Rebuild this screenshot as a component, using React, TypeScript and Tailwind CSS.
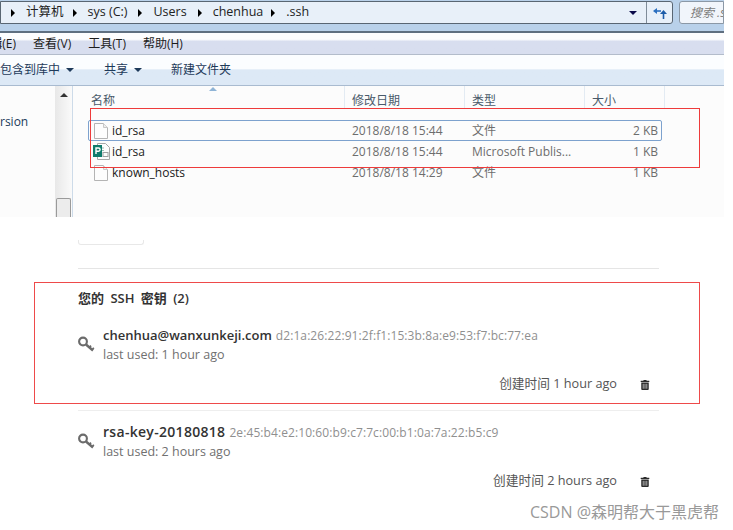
import { FaTrashAlt } from "react-icons/fa";
import type { ReactNode } from "react";

const cjk = "font-['Open_Sans','Noto_Sans_CJK_SC',sans-serif]";

function Tri({ className = "" }: { className?: string }) {
  return <span className={`inline-block w-0 h-0 border-l-[4px] border-r-[4px] border-t-[4px] border-l-transparent border-r-transparent ${className}`} />;
}

function Crumb({ label, className = "" }: { label: string; className?: string }) {
  return (
    <>
      <span className="w-0 h-0 border-y-[4px] border-l-[4px] border-y-transparent border-l-black" />
      <span className={className}>{label}</span>
    </>
  );
}

function FileIcon() {
  return (
    <svg width="14" height="16" viewBox="0 0 14 16" className="shrink-0">
      <path d="M.5.5H9.5L13.5 4.5V15.5H.5Z" fill="#fdfdfd" stroke="#b4b4b4" />
      <path d="M9.5.5V4.5H13.5" fill="#eee" stroke="#c8c8c8" />
    </svg>
  );
}

function PubIcon() {
  return (
    <svg width="17" height="17" viewBox="0 0 17 17" className="shrink-0">
      <path d="M4.5.5H12.5L16.5 4.5V16.5H4.5Z" fill="#fdfdfd" stroke="#a8a8a8" />
      <path d="M8 5H11M8 7.5H11" stroke="#9dbdb4" />
      <rect x="10" y="9.5" width="5" height="4" fill="none" stroke="#a0a0a0" />
      <rect x="0" y="2" width="9" height="12" fill="#0f7b6c" />
      <path d="M3 11V5H5.5A1.5 1.5 0 0 1 5.5 8.2H3" fill="none" stroke="#fff" strokeWidth="1.4" />
    </svg>
  );
}

function FileRow({ icon, name, date, type, size, selected }: { icon: ReactNode; name: string; date: string; type: string; size: string; selected?: boolean }) {
  return (
    <div className={`flex items-center h-[21px] w-[574px] rounded-[2px] border ${selected ? "border-[#7da2ce]" : "border-transparent"}`}>
      <div className="w-[3px]" />
      <div className="w-[18px] flex justify-center">{icon}</div>
      <div className="w-[242px] pl-[2px] text-[#1a1a1a]">{name}</div>
      <div className="w-[120px] text-[#6d6d6d]">{date}</div>
      <div className="w-[123px] text-[#6d6d6d]">{type}</div>
      <div className="w-[63px] text-right text-[#6d6d6d]">{size}</div>
    </div>
  );
}

function KeyIcon() {
  return (
    <svg width="17" height="17" viewBox="0 0 17 17" fill="none" stroke="#6b6b6b" className="shrink-0">
      <circle cx="5" cy="5.5" r="3.9" strokeWidth="2.1" />
      <path d="M8 8.5 15 14.5" strokeWidth="2.4" />
      <path d="M11.5 11.5 13 9.6M14.2 13.8 15.8 11.8" strokeWidth="1.7" />
    </svg>
  );
}

function SshKey({ name, nameClass, finger, used, created }: { name: string; nameClass: string; finger: string; used: string; created: string }) {
  return (
    <div className="w-[581px]">
      <div className="flex">
        <div className="w-[25px] pt-[12px]"><KeyIcon /></div>
        <div>
          <div className="h-[20px] leading-[20px] whitespace-nowrap">
            <span className={`font-semibold text-[#333] ${nameClass}`}>{name}</span>
            <span className="text-[12px] tracking-[0.09px] text-[#8f8f8f] ml-[4px]">{finger}</span>
          </div>
          <div className="h-[20px] leading-[21px] text-[12.5px] text-[#707070]">last used: {used}</div>
        </div>
      </div>
      <div className="flex justify-end items-center h-[18px] mt-[11px] pr-[9px] text-[12.7px] text-[#555]">
        <span>创建时间 {created}</span>
        <FaTrashAlt className="ml-[23px] mt-[1px] text-[#2b2b2b]" size={10} />
      </div>
    </div>
  );
}

export default function App() {
  return (
    <div className={`relative w-[733px] h-[530px] bg-white overflow-hidden ${cjk}`}>
      {/* Explorer window */}
      <div className="w-[724px] h-[217px] flex flex-col text-[12px] bg-[#fcfcfc]">
        <div className="h-[31px] bg-[#b9d1ea] flex items-start pt-[1px] gap-[6px] shrink-0">
          <div className="w-[673px] h-[23px] bg-[#e8f0f9] border border-[#596673] rounded-r-[3px] flex items-center relative">
            <div className="flex-1 flex items-center gap-[11px] pl-[10px] text-[12.5px] text-[#222] leading-none">
              <Crumb label="计算机" className="-mr-[2px]" />
              <Crumb label="sys (C:)" />
              <Crumb label="Users" />
              <Crumb label="chenhua" className="-mr-[3px]" />
              <Crumb label=".ssh" />
            </div>
            <Tri className="border-t-[#0a0a4a] mr-[9px]" />
            <div className="w-[26px] h-full border-l border-[#7f8c99] flex items-center justify-center">
              <svg width="14" height="12" viewBox="0 0 14 12">
                <path d="M0 4 4 1V7Z" fill="#2a6fc0" />
                <path d="M4 4H8" stroke="#2a6fc0" strokeWidth="1.6" />
                <path d="M7 6 10.5 2 14 6Z" fill="#1d5ca8" transform="translate(0 1)" />
                <path d="M10.5 7V12" stroke="#1d5ca8" strokeWidth="1.6" />
              </svg>
            </div>
          </div>
          <div className="flex-1 h-[23px] bg-[#f1f5fb] border border-[#8b98a6] rounded-l-[3px] flex items-center pl-[10px] overflow-hidden text-[12px] italic text-[#7d7d7d] whitespace-nowrap">
            搜索 .ssh
          </div>
        </div>
        <div className="h-[24px] shrink-0 border-t-2 border-[#5f6f80] bg-gradient-to-b from-[#fdfdfe] from-30% to-[#d8deef] to-40% flex items-center gap-[17px] text-[#1c1c1c] border-b border-b-[#b3bccb]">
          <div className="w-[16px] overflow-hidden whitespace-nowrap flex justify-end"><span>编辑(E)</span></div>
          <span>查看(V)</span>
          <span>工具(T)</span>
          <span>帮助(H)</span>
        </div>
        <div className="h-[31px] shrink-0 bg-gradient-to-b from-[#fbfdff] from-45% to-[#dde9f6] to-50% border-b border-[#a9bbd0] flex items-center text-[#1e3a5a]">
          <span className="whitespace-nowrap">包含到库中</span>
          <Tri className="border-t-[#1e3a5a] ml-[6px]" />
          <span className="ml-[30px]">共享</span>
          <Tri className="border-t-[#1e3a5a] ml-[6px]" />
          <span className="ml-[29px]">新建文件夹</span>
        </div>
        <div className="flex-1 flex min-h-0">
          <div className="w-[55px] pt-[27px] text-[#1a3a5a] shrink-0">
            <div className="w-[55px] overflow-hidden flex"><span>rsion</span></div>
          </div>
          <div className="w-[17px] bg-gradient-to-r from-[#e8e8e8] to-[#fafafa] flex flex-col justify-between items-center pt-[7px] shrink-0">
            <Tri className="rotate-180 border-t-[#333]" />
            <div className="w-[15px] h-[19px] bg-[#ececec] border border-[#9a9a9a] border-b-0 rounded-t-[2px]" />
          </div>
          <div className="flex-1 border-l border-[#cddbe9] min-w-0">
            <div className="relative h-[22px] flex items-end pb-0 text-[#4a5a6a] leading-[14px]">
              <span className="absolute left-[136px] top-[1px] w-0 h-0 border-x-[4px] border-b-[4px] border-x-transparent border-b-[#8fb4d6]" />
              <div className="w-[272px] h-full flex items-end pl-[18px] border-r border-[#e3ebf3]">名称</div>
              <div className="w-[120px] h-full flex items-end pl-[7px] border-r border-[#e3ebf3]">修改日期</div>
              <div className="w-[120px] h-full flex items-end pl-[7px] border-r border-[#e3ebf3]">类型</div>
              <div className="w-[80px] h-full flex items-end pl-[7px] border-r border-[#e3ebf3]">大小</div>
            </div>
            <div className="pt-[12px] pl-[15px] leading-none">
              <FileRow selected icon={<FileIcon />} name="id_rsa" date="2018/8/18 15:44" type="文件" size="2 KB" />
              <FileRow icon={<PubIcon />} name="id_rsa" date="2018/8/18 15:44" type="Microsoft Publis..." size="1 KB" />
              <FileRow icon={<FileIcon />} name="known_hosts" date="2018/8/18 14:29" type="文件" size="1 KB" />
            </div>
          </div>
        </div>
      </div>

      {/* SSH key page */}
      <div className="pl-[78px]">
        <div className="w-[66px] h-[5px] mt-[23px] border-b border-x border-[#e8e8e8] rounded-b-[3px]" />
        <div className="w-[581px] border-t border-[#e5e5e5] mt-[23px] pt-[20px]">
          <div className="text-[13px] [word-spacing:3px] font-semibold text-[#333] leading-[18px]">您的 SSH 密钥 (2)</div>
        </div>
        <div className="mt-[17px] pb-[17px] border-b border-[#eeeeee] w-[581px]">
          <SshKey name="chenhua@wanxunkeji.com" nameClass="text-[13px]" finger="d2:1a:26:22:91:2f:f1:15:3b:8a:e9:53:f7:bc:77:ea" used="1 hour ago" created="1 hour ago" />
        </div>
        <div className="mt-[10px]">
          <SshKey name="rsa-key-20180818" nameClass="text-[14px] tracking-[0.3px]" finger="2e:45:b4:e2:10:60:b9:c7:7c:00:b1:0a:7a:22:b5:c9" used="2 hours ago" created="2 hours ago" />
        </div>
      </div>

      {/* Annotations */}
      <div className="absolute left-[90px] top-[108px] w-[610px] h-[60px] border border-[#ee3b3b]" />
      <div className="absolute left-[34px] top-[282px] w-[666px] h-[122px] border border-[#ee4a4a]" />
      <div className="absolute left-[530px] top-[503px] text-[16px] leading-[18px] text-[#999] whitespace-nowrap">CSDN @森明帮大于黑虎帮</div>
    </div>
  );
}
